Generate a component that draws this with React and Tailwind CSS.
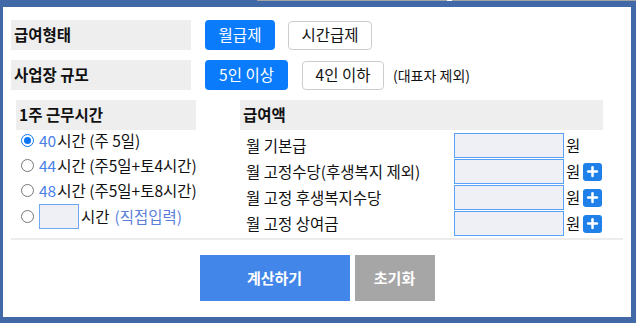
import { Plus } from 'lucide-react'

const FONT = { fontFamily: '"Malgun Gothic", "Noto Sans CJK KR", sans-serif' }

const HOURS = [
  { n: '40', label: '시간 (주 5일)', checked: true },
  { n: '44', label: '시간 (주5일+토4시간)' },
  { n: '48', label: '시간 (주5일+토8시간)' },
]

const PAY = [
  { label: '월 기본급', plus: false },
  { label: '월 고정수당(후생복지 제외)', plus: true },
  { label: '월 고정 후생복지수당', plus: true },
  { label: '월 고정 상여금', plus: true },
]

function Radio({ checked }) {
  return (
    <span className={`w-[13px] h-[13px] rounded-full shrink-0 flex items-center justify-center border ${checked ? 'border-[#0a75f5] bg-white' : 'border-[#767676] bg-white'}`}>
      {checked && <span className="w-[7px] h-[7px] rounded-full bg-[#0a75f5]" />}
    </span>
  )
}

function PlusBtn() {
  return (
    <span className="w-[19px] h-[18px] rounded-[3px] bg-[#1f80ea] flex items-center justify-center">
      <Plus size={15} strokeWidth={4} color="#fff" />
    </span>
  )
}

export default function App() {
  return (
    <div className="w-[636px] h-[323px] bg-[#4169a8] flex flex-col text-[#111]" style={FONT}>
      <div className="h-[7px] shrink-0 flex items-start">
        <div className="w-[257px]" />
        <div className="h-px w-[190px] bg-[#a4a4a4]" />
        <div className="h-px w-[5px] bg-white" />
        <div className="h-px flex-1 bg-[#a4a4a4]" />
      </div>
      <div className="flex-1 flex pl-[3px] pr-[5px] pb-[6px]">
        <div className="flex-1 bg-white flex flex-col pt-[13px]">
          {/* 급여형태 */}
          <div className="flex items-center pl-[8px] h-[30px]">
            <div className="w-[180px] h-[30px] bg-[#eeeeee] flex items-center pl-[3px] font-bold text-[15.5px]">급여형태</div>
            <button className="ml-[14px] w-[70px] h-[30px] rounded-[4px] bg-[#0a7cfb] text-white text-[15.5px]">월급제</button>
            <button className="ml-[13px] w-[84px] h-[29px] rounded-[4px] border border-[#cccccc] bg-white text-[15.5px]">시간급제</button>
          </div>
          {/* 사업장 규모 */}
          <div className="flex items-center pl-[8px] h-[30px] mt-[10px]">
            <div className="w-[180px] h-[30px] bg-[#eeeeee] flex items-center pl-[3px] font-bold text-[15.5px]">사업장 규모</div>
            <button className="ml-[14px] w-[83px] h-[30px] rounded-[4px] bg-[#0a7cfb] text-white text-[15.5px]">5인 이상</button>
            <button className="ml-[14px] w-[82px] h-[29px] rounded-[4px] border border-[#cccccc] bg-white text-[15.5px]">4인 이하</button>
            <span className="ml-[9px] text-[14px]">(대표자 제외)</span>
          </div>

          <div className="flex mt-[10px]">
            {/* 1주 근무시간 */}
            <div className="ml-[13px] w-[180px] flex flex-col">
              <div className="h-[30px] bg-[#eeeeee] flex items-center pl-[3px] font-bold text-[15.5px]">1주 근무시간</div>
              <div className="flex flex-col mt-[-2px]">
                {HOURS.map(h => (
                  <label key={h.n} className="h-[25px] flex items-center pl-[5px] text-[15.5px] whitespace-nowrap">
                    <Radio checked={h.checked} />
                    <span className="ml-[5px] text-[#4a80e6]">{h.n}</span>
                    <span className="ml-[1px]">{h.label}</span>
                  </label>
                ))}
                <label className="h-[27px] flex items-center pl-[5px] text-[15.5px] whitespace-nowrap">
                  <Radio />
                  <span className="ml-[5px] w-[40px] h-[25px] bg-[#eef0f5] border border-[#6ea8f2]" />
                  <span className="ml-[2px]">시간</span>
                  <span className="ml-[5px] text-[#5b7fd8]">(직접입력)</span>
                </label>
              </div>
            </div>

            {/* 급여액 */}
            <div className="ml-[44px] w-[363px] flex flex-col">
              <div className="h-[30px] bg-[#eeeeee] flex items-center pl-[3px] font-bold text-[15.5px]">급여액</div>
              <div className="flex flex-col gap-px mt-[3px]">
                {PAY.map(p => (
                  <div key={p.label} className="h-[25px] flex items-center">
                    <span className="w-[214px] pl-[6px] text-[15.5px] whitespace-nowrap">{p.label}</span>
                    <span className="w-[110px] h-[25px] bg-[#eef0f5] border-[1.5px] border-[#5aa2f8]" />
                    <span className="ml-[2px] text-[15.5px]">원</span>
                    {p.plus && <span className="ml-[3px]"><PlusBtn /></span>}
                  </div>
                ))}
              </div>
            </div>
          </div>

          <div className="mx-[8px] mt-[2px] h-[2px] bg-[#ececec]" />

          <div className="flex justify-center gap-[5px] mt-[15px]">
            <button className="w-[150px] h-[46px] bg-[#4386e9] text-white font-bold text-[15px]">계산하기</button>
            <button className="w-[80px] h-[46px] bg-[#a6a6a6] text-white font-bold text-[15px]">초기화</button>
          </div>
        </div>
      </div>
    </div>
  )
}
